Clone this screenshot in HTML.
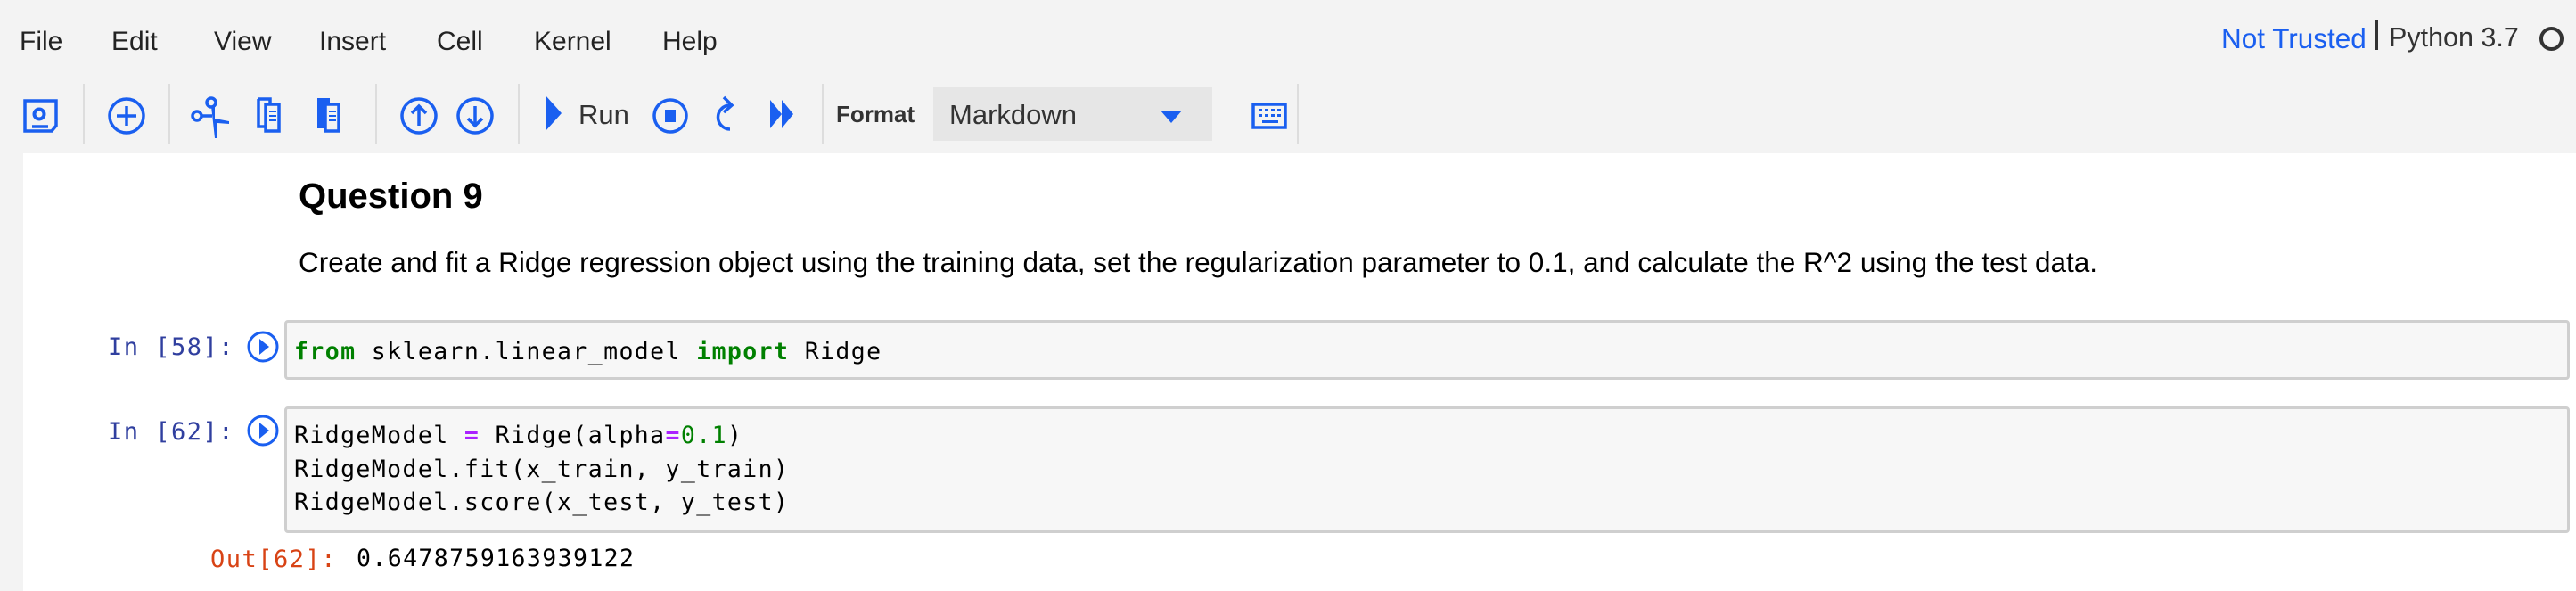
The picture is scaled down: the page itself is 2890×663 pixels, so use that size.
<!DOCTYPE html>
<html><head><meta charset="utf-8"><style>
*{margin:0;padding:0;box-sizing:border-box}
body{width:2890px;height:663px;overflow:hidden;background:#f3f3f3;font-family:"Liberation Sans",Arial,sans-serif;position:relative}
.a{position:absolute;white-space:pre}
.menu{top:30px;font-size:30px;color:#222}
.cell{position:absolute;left:319px;width:2564px;background:#f7f7f7;border:3px solid #cfcfcf;border-radius:4px}
.code{font-family:"DejaVu Sans Mono","Liberation Mono",monospace;font-size:26.5px;color:#000;line-height:37.5px;letter-spacing:1.4px}
.kw{color:#008000;font-weight:bold}
.prompt{font-family:"DejaVu Sans Mono","Liberation Mono",monospace;font-size:27px;color:#303f9f;letter-spacing:1.5px}
</style></head><body>
<div class="a menu" style="left:22px">File</div>
<div class="a menu" style="left:125px">Edit</div>
<div class="a menu" style="left:240px">View</div>
<div class="a menu" style="left:358px">Insert</div>
<div class="a menu" style="left:490px">Cell</div>
<div class="a menu" style="left:599px">Kernel</div>
<div class="a menu" style="left:743px">Help</div>
<div class="a" style="left:2492px;top:25px;font-size:31.5px;color:#1a5ff0">Not Trusted</div>
<div class="a" style="left:2665px;top:22px;width:3px;height:34px;background:#333"></div>
<div class="a" style="left:2680px;top:25px;font-size:30.5px;color:#333">Python 3.7</div>
<div class="a" style="left:2849px;top:30px;width:27px;height:27px;border:4px solid #333;border-radius:50%"></div>

<div class="a" style="left:1047px;top:98px;width:313px;height:60px;background:#e6e6e6"></div>
<svg class="a" style="left:0;top:90px" width="1500" height="82">
<g stroke="#ddd" stroke-width="2"><line x1="94" y1="4" x2="94" y2="72"/><line x1="190" y1="4" x2="190" y2="72"/><line x1="422" y1="4" x2="422" y2="72"/><line x1="582" y1="4" x2="582" y2="72"/><line x1="923" y1="4" x2="923" y2="72"/><line x1="1456" y1="4" x2="1456" y2="72"/></g>
<g fill="none" stroke="#1a5ff0" stroke-width="3.5">
<path d="M28 23h35v28l-5 6h-30z"/><circle cx="44" cy="38" r="5.5" stroke-width="4"/><line x1="36" y1="52" x2="54" y2="52"/>
<circle cx="142" cy="40" r="19"/><line x1="142" y1="29" x2="142" y2="51"/><line x1="131" y1="40" x2="153" y2="40"/>
<circle cx="221" cy="40" r="5"/><circle cx="237" cy="25" r="5"/><path d="M226 40h12"/>
<path d="M290 21h13v4M290 21v31h7"/><rect x="298" y="27" width="15" height="30"/>
<rect x="365" y="27" width="15" height="30"/>
<circle cx="470" cy="40" r="19"/><path d="M470 51V29M462 37l8-8 8 8"/>
<circle cx="533" cy="40" r="19"/><path d="M533 29v22M525 43l8 8 8-8"/>
<circle cx="752" cy="40" r="18"/>
<path d="M819 28a13 13 0 1 0 0 27"/><path d="M812 19l9 9-9 8"/>
<rect x="1406" y="27" width="36" height="26"/>
</g>
<g fill="#1a5ff0">
<path d="M237 29l4 0 0 14 16 3 0 3-13-1 0 17-3 0z"/>
<path d="M356 20h14v8h-14z M356 20h10v34h-10z"/>
<rect x="746" y="33" width="12" height="14"/>
<path d="M612 17l18 20-18 20z"/>
<path d="M864 22l13 16-13 16zM877 22l13 16-13 16z"/>
<path d="M1302 34h24l-12 14z"/>
<rect x="1412" y="32" width="4" height="3"/><rect x="1419" y="32" width="4" height="3"/><rect x="1426" y="32" width="4" height="3"/><rect x="1433" y="32" width="4" height="3"/>
<rect x="1412" y="38" width="4" height="3"/><rect x="1419" y="38" width="4" height="3"/><rect x="1426" y="38" width="4" height="3"/><rect x="1433" y="38" width="4" height="3"/>
<rect x="1416" y="45" width="18" height="3"/>
</g>
<g stroke="#1a5ff0" stroke-width="2"><line x1="302" y1="35" x2="310" y2="35"/><line x1="302" y1="40" x2="310" y2="40"/><line x1="302" y1="45" x2="310" y2="45"/><line x1="369" y1="35" x2="377" y2="35"/><line x1="369" y1="40" x2="377" y2="40"/><line x1="369" y1="45" x2="377" y2="45"/></g>
</svg>
<div class="a" style="left:649px;top:111px;font-size:31px;color:#333">Run</div>
<div class="a" style="left:938px;top:113px;font-size:26px;font-weight:bold;color:#333">Format</div>
<div class="a" style="left:1065px;top:111px;font-size:31px;color:#333">Markdown</div>

<div class="a" style="left:26px;top:172px;width:2864px;height:491px;background:#fff"></div>
<div class="a" style="left:335px;top:198px;font-size:40px;font-weight:bold;color:#000">Question 9</div>
<div class="a" style="left:335px;top:276px;font-size:31.5px;color:#000">Create and fit a Ridge regression object using the training data, set the regularization parameter to 0.1, and calculate the R^2 using the test data.</div>

<div class="a prompt" style="left:121px;top:374px">In [58]:</div>
<svg class="a" style="left:276px;top:370px" width="38" height="38"><circle cx="19" cy="19" r="16" fill="none" stroke="#1a5ff0" stroke-width="3"/><path d="M15 10l11 9-11 9z" fill="#1a5ff0"/></svg>
<div class="cell" style="top:359px;height:67px"></div>
<div class="a code" style="left:330px;top:376px"><span class="kw">from</span> sklearn.linear_model <span class="kw">import</span> Ridge</div>

<div class="a prompt" style="left:121px;top:469px">In [62]:</div>
<svg class="a" style="left:276px;top:464px" width="38" height="38"><circle cx="19" cy="19" r="16" fill="none" stroke="#1a5ff0" stroke-width="3"/><path d="M15 10l11 9-11 9z" fill="#1a5ff0"/></svg>
<div class="cell" style="top:456px;height:142px"></div>
<div class="a code" style="left:330px;top:470px">RidgeModel <span style="color:#aa22ff;font-weight:bold">=</span> Ridge(alpha<span style="color:#aa22ff;font-weight:bold">=</span><span style="color:#008000">0.1</span>)
RidgeModel.fit(x_train, y_train)
RidgeModel.score(x_test, y_test)</div>

<div class="a prompt" style="left:236px;top:612px;color:#d84315">Out[62]:</div>
<div class="a code" style="left:400px;top:608px">0.6478759163939122</div>
</body></html>
